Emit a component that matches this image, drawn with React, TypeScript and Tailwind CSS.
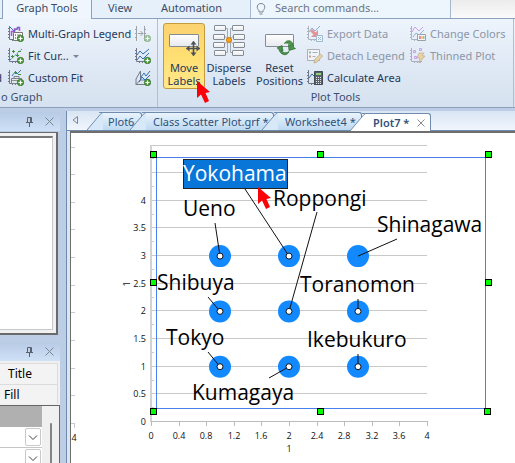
import type { ReactNode } from "react";

const UI = "font-['Noto_Sans','Open_Sans',sans-serif]";

/* ---------- small ribbon icons ---------- */

function Axes() {
  return (
    <g stroke="#6f7884" fill="none">
      <path d="M1.5 0v13.5H12" />
      <path d="M0 2.5h1M0 5.5h1M0 8.5h1M0 11.5h1M4.5 14v1M7.5 14v1M10.5 14v1" />
    </g>
  );
}

function Plus() {
  return (
    <g>
      <circle cx="12.5" cy="12.5" r="3.2" fill="#4f9a3d" stroke="#2f6f25" strokeWidth=".7" />
      <path d="M12.5 10.500v4M10.500 12.500h4" stroke="#fff" strokeWidth="1.2" />
    </g>
  );
}

function Icon({ children, faded = false }: { children: ReactNode; faded?: boolean }) {
  return (
    <svg viewBox="0 0 16 16" aria-hidden="true" className={`size-4 shrink-0 ${faded ? "opacity-50" : ""}`}>
      {children}
    </svg>
  );
}

const icons = {
  legend: (
    <Icon>
      <Axes />
      <path d="M3.500 10V5.500h3V3h3V1.500h2V5" fill="none" stroke="#b050d8" strokeWidth="1.500" />
      <path d="M2 1l4 4 5-4" fill="none" stroke="#3a78b8" />
      <path d="M5.500 6.500h9v8h-9z" fill="#fff" stroke="#777" />
      <path d="M7 9h1M7 12h1" stroke="#d05030" strokeWidth="1.500" />
      <path d="M9 9h4M9 12h2" stroke="#777" />
      <Plus />
    </Icon>
  ),
  fit: (
    <Icon>
      <Axes />
      <path d="M2 12L14 1" stroke="#3a78b8" strokeDasharray="2 1" />
      <path d="M4 3.500h3M5.500 2v3M8 7.500h3M9.500 6v3M3 8.500h3M4.500 7v3M10 3.500h3" stroke="#3f8f3a" />
      <Plus />
    </Icon>
  ),
  custom: (
    <Icon>
      <Axes />
      <path d="M4 6l3-4 2 2 4-4" fill="none" stroke="#3a78b8" />
      <path d="M6 2.500h3M7.500 1v3M10 4.500h3" stroke="#3f8f3a" />
      <path d="M3.500 8.500h10v5h-10zM6 8V6.500h5V8" fill="#e3e6ea" stroke="#7a828c" />
      <path d="M4 10.500h9" stroke="#8a9098" />
      <Plus />
    </Icon>
  ),
  addAxis: (
    <Icon faded>
      <path d="M1.500 0v15M9.500 0v15M0 3.500h1M0 7.500h1M0 11.500h1M10 3.500h1M10 7.500h1" stroke="#555" />
      <path d="M3 7.500h5M5.500 5L8 7.500 5.500 10" fill="none" stroke="#555" />
      <Plus />
    </Icon>
  ),
  addPlot: (
    <Icon>
      <Axes />
      <path d="M2 7l3-4 3 3 6-5" fill="none" stroke="#2f6fb5" />
      <path d="M2 12l3-4 3 3 6-6" fill="none" stroke="#2f6fb5" />
      <Plus />
    </Icon>
  ),
  addInset: (
    <Icon>
      <path d="M5.500 1v9H15M5.500 10L1 14.500h9M1 14.500V9l4.500-8" fill="none" stroke="#737b85" />
      <path d="M6 7l3-4 2 3 4-5M4 12l3-5 3 3 5-5" fill="none" stroke="#2f6fb5" />
      <Plus />
    </Icon>
  ),
  exportData: (
    <Icon faded>
      <Axes />
      <path d="M2 6l3-4 3 3 5-5" fill="none" stroke="#2f6fb5" />
      <path d="M4 4l5 5" stroke="#d93a32" strokeWidth="3" />
      <path d="M4 11h7V4z" fill="#d93a32" />
      <path d="M9.500 9.500h6v6h-6zM11 11l3 3M14 11l-3 3" fill="#fff" stroke="#5a83b0" />
    </Icon>
  ),
  detach: (
    <Icon faded>
      <path d="M.5 1.500h12v11H.5z" fill="#fff" stroke="#777" />
      <path d="M2 4.500h2" stroke="#3f8f3a" strokeWidth="2" />
      <path d="M2 8.500h2" stroke="#c05030" strokeWidth="2" />
      <path d="M5.500 4.500h5M5.500 8.500h3" stroke="#777" />
      <path d="M7 15l1-4 5.500-5 2 2-5.500 6z" fill="#f0bd54" stroke="#93702c" strokeWidth=".8" />
    </Icon>
  ),
  area: (
    <Icon>
      <Axes />
      <path d="M2 8l3-4 3 3" fill="none" stroke="#2f6fb5" />
      <path d="M7.500 1.500h8v13h-8z" fill="#59616a" stroke="#434a52" />
      <path d="M9 3h5v2H9z" fill="#8fd07c" />
      <path d="M9 7.500h5M9 9.500h5M9 11.500h5M9 13.500h5" stroke="#e8ebee" strokeDasharray="1 1" />
    </Icon>
  ),
  colors: (
    <Icon faded>
      <Axes />
      <path d="M2 6l3-5 4 4 4-4" fill="none" stroke="#b050d8" />
      <path d="M3 11l3-4 3 2 5-5" fill="none" stroke="#3a78b8" />
      <path d="M7.500 8.500h8v6h-8z" fill="#fff" stroke="#555" />
      <path d="M9 10h2v3H9z" fill="#d33" />
      <path d="M11 10h2v3h-2z" fill="#eb2" />
      <path d="M13 10h1.500v3H13z" fill="#29a" />
    </Icon>
  ),
  thinned: (
    <Icon faded>
      <Axes />
      <path d="M3.500 2.500h2v2h-2zM9.500.5h2v2h-2zM4.500 8.500h2v2h-2z" fill="none" stroke="#b050d8" />
      <path d="M9 5h5l-2 3h3l-6 7 1-5H7z" fill="#f3bd4c" stroke="#9b7633" strokeWidth=".7" />
    </Icon>
  ),
};

/* ---------- large ribbon icons ---------- */

function LabelBox({ x, y, w, h }: { x: number; y: number; w: number; h: number }) {
  return <rect x={x + 0.5} y={y + 0.5} width={w - 1} height={h - 1} rx=".5" fill="url(#labelFill)" stroke="#848b93" />;
}

function MoveIcon() {
  return (
    <svg viewBox="0 0 32 32" className="size-8 shrink-0" aria-hidden="true">
      <defs>
        <linearGradient id="labelFill" x2="0" y2="1">
          <stop offset="0" stopColor="#fff" />
          <stop offset="1" stopColor="#e6e9ee" />
        </linearGradient>
      </defs>
      <LabelBox x={1} y={10} w={30} h={13} />
      <path
        d="M25.500 17.500v14M18.500 24.500h14"
        stroke="#4b5158"
        strokeWidth="1.600"
      />
      <path d="M25.500 17l3 3.500h-6zM25.500 32l-3-3.500h6zM18 24.500l3.500-3v6zM32 24.500l-3.500-3v6z" fill="#4b5158" />
    </svg>
  );
}

function DisperseIcon() {
  return (
    <svg viewBox="0 0 32 32" className="size-8 shrink-0" aria-hidden="true">
      <path d="M12 4.500h2.500v24H12M20 4.500h-2.500v24H20M12 12.500l8 7M20 12.500l-8 7" fill="none" stroke="#a2a8b0" />
      {[1, 10, 18, 26].map((y, i) => (
        <g key={y}>
          <LabelBox x={i % 3 === 0 ? 1 : 0} y={y} w={12} h={6} />
          <LabelBox x={i % 3 === 0 ? 19 : 20} y={y} w={12} h={6} />
        </g>
      ))}
      <circle cx="16" cy="16" r="2.500" fill="#ffa51e" stroke="#d07a00" />
    </svg>
  );
}

function ResetIcon() {
  return (
    <svg viewBox="0 0 32 32" className="size-8 shrink-0" aria-hidden="true">
      <LabelBox x={1} y={10} w={29} h={13} />
      <path d="M13 24l5-2.500 1 5.500-1.700-1c1 3 5 3.500 7.700 1.500-1 4-8 5.500-10.500-3z" fill="#4c944c" stroke="#28682c" strokeWidth=".7" />
      <path d="M31.500 24.500l-6.500 2-.5-6 2 1.500c0-2.500-3-3.500-6-2.500 2-4.500 9-4 9 4z" fill="#4c944c" stroke="#28682c" strokeWidth=".7" />
    </svg>
  );
}

/* ---------- ribbon controls ---------- */

function SmallButton({ icon, label, disabled = false, menu = false }: { icon: ReactNode; label?: string; disabled?: boolean; menu?: boolean }) {
  return (
    <button
      type="button"
      disabled={disabled}
      aria-label={label ?? "Add"}
      className={`flex h-[22px] items-center gap-1 whitespace-nowrap ${disabled ? "text-[#8c97a8]" : "text-[#1e395b]"}`}
    >
      {icon}
      {label}
      {menu && <span className="border-x-3 border-t-3 border-x-transparent border-t-[#7b8798]" />}
    </button>
  );
}

function LargeButton({ icon, label, width, active = false }: { icon: ReactNode; label: string; width: string; active?: boolean }) {
  return (
    <button
      type="button"
      aria-pressed={active}
      className={`flex h-[66px] shrink-0 flex-col items-center rounded-[3px] border text-center leading-[13px] text-[#1e395b] ${width} ${
        active ? "border-[#c29b3e] bg-linear-to-b from-[#fbd271] via-[#ffdf72] to-[#ffe98a]" : "border-transparent"
      }`}
    >
      {icon}
      <span className="pt-[5px]">{label}</span>
    </button>
  );
}

function RibbonTabs() {
  return (
    <nav className="flex h-[19px] border-b border-[#8ba0bc] bg-linear-to-b from-[#ececec] to-[#fafafa] leading-4 text-[#3b4c66]">
      <div className="flex w-[250px] shrink-0 bg-[#e6f0fa]">
        <span className="w-[3px] border-r border-[#8ba0bc]" />
        <button type="button" className="-mb-px h-[19px] w-[89px] border-r border-[#8ba0bc] bg-[#f0f6fd] pb-1">Graph Tools</button>
        <button type="button" className="w-[56px] pb-1">View</button>
        <button type="button" className="w-[87px] pb-1">Automation</button>
      </div>
      <label className="flex w-[201px] shrink-0 items-center border-x border-[#a6b7ce] bg-[#edf5fd]">
        <svg viewBox="0 0 12 14" className="ml-1 h-[14px] w-3 shrink-0" aria-hidden="true">
          <path d="M4 10V8.500C1 6 2 1.500 6 1.500S11 6 8 8.500V10zM4.500 12h3" fill="none" stroke="#7a8390" />
        </svg>
        <input
          aria-label="Search commands"
          placeholder="Search commands..."
          className="ml-2 h-4 w-full bg-transparent pb-0.5 outline-none placeholder:text-[#6c7683]"
        />
      </label>
    </nav>
  );
}

function Ribbon() {
  return (
    <div className="flex h-[89px] border-b border-[#8ba0bc] bg-linear-to-b from-[#edf4fc] via-[#e0e9f5] to-[#d6e2f0]">
      <section className="flex w-[158px] shrink-0 flex-col border-r border-[#b0bfd3] pt-1">
        <div className="flex">
          <div className="flex w-2 shrink-0 flex-col justify-end">
            <span className="flex h-[22px] w-0.5 items-center justify-end text-[#1e395b]">d</span>
          </div>
          <div className="flex w-[127px] flex-col items-start">
            <SmallButton icon={icons.legend} label="Multi-Graph Legend" />
            <SmallButton icon={icons.fit} label="Fit Cur..." menu />
            <SmallButton icon={icons.custom} label="Custom Fit" />
          </div>
          <div className="flex flex-col">
            <SmallButton icon={icons.addAxis} disabled />
            <SmallButton icon={icons.addPlot} />
            <SmallButton icon={icons.addInset} />
          </div>
        </div>
        <h2 className="pl-px leading-4 text-[#3d4f70]">o Graph</h2>
      </section>
      <section className="flex w-[356px] shrink-0 flex-col border-r border-[#b0bfd3] pt-1">
        <div className="flex h-[66px] pl-[5px]">
          <LargeButton icon={<MoveIcon />} label="Move Labels" width="w-[42px]" active />
          <LargeButton icon={<DisperseIcon />} label="Disperse Labels" width="w-[48px]" />
          <LargeButton icon={<ResetIcon />} label="Reset Positions" width="w-[53px]" />
          <div className="flex w-[104px] shrink-0 flex-col items-start pl-px">
            <SmallButton icon={icons.exportData} label="Export Data" disabled />
            <SmallButton icon={icons.detach} label="Detach Legend" disabled />
            <SmallButton icon={icons.area} label="Calculate Area" />
          </div>
          <div className="flex flex-col items-start">
            <SmallButton icon={icons.colors} label="Change Colors" disabled />
            <SmallButton icon={icons.thinned} label="Thinned Plot" disabled />
          </div>
        </div>
        <h2 className="text-center leading-4 text-[#3d4f70]">Plot Tools</h2>
      </section>
    </div>
  );
}

/* ---------- side panels ---------- */

function PanelHeader() {
  return (
    <header className="flex h-[19px] shrink-0 items-center justify-end gap-[11px] bg-linear-to-b from-[#b8cbe5] to-[#cfe1f7] pr-[6px]">
      <button type="button" aria-label="Pin">
        <svg viewBox="0 0 9 10" className="h-[10px] w-[9px]" fill="none" stroke="#59616e">
          <path d="M2.500 5.500v-5h4v5M5.500 1v4M1 5.500h7M4.500 6v4" />
        </svg>
      </button>
      <button type="button" aria-label="Close">
        <svg viewBox="0 0 9 9" className="size-[9px]" fill="none" stroke="#7c8592">
          <path d="M.5.5l8 8M8.500.5l-8 8" />
        </svg>
      </button>
    </header>
  );
}

function ValueSelect({ label }: { label: string }) {
  return (
    <div className="flex h-[21px] justify-end border-b border-[#c6c6c6] bg-white pt-px pr-px">
      <span className="relative h-[18px] w-4 rounded-xs border border-[#c9c9c9]">
        <select aria-label={label} className="absolute inset-0 w-full appearance-none opacity-0">
          <option></option>
        </select>
        <svg viewBox="0 0 14 16" className="h-4 w-3.5" fill="none" stroke="#444" aria-hidden="true">
          <path d="M3 6.500l4 4 4-4" />
        </svg>
      </span>
    </div>
  );
}

function SidePanels() {
  return (
    <aside className="flex w-[60px] shrink-0 flex-col pt-px">
      <PanelHeader />
      <div className="mt-px mr-0.5 h-[203px] border-t border-r-2 border-b-2 border-[#6a6a6a] bg-[#f0f0f0] pt-[3px] pr-[3px] pb-[3px]">
        <div className="h-full border-t-2 border-r border-b border-[#777] border-r-[#c9c9c9] border-b-[#c9c9c9] bg-white" />
      </div>
      <div className="h-[7px]" />
      <PanelHeader />
      <div className="flex grow flex-col bg-[#f0f0f0] text-[12px] leading-[20px] text-black">
        <button type="button" className="mt-0.5 mr-0.5 h-[21px] border-t border-r border-[#dcdcdc] bg-[#f3f3f3] pl-2 text-left">Title</button>
        <button type="button" className="mr-0.5 h-[20px] border-t border-r border-[#dcdcdc] bg-[#f3f3f3] pl-1 text-left">Fill</button>
        <div className="mt-px flex h-[60px] overflow-hidden border-t border-r border-[#666]">
          <div className="w-[42px]">
            <div className="h-[21px] bg-[#b0b0b0]" />
            <ValueSelect label="First property" />
            <ValueSelect label="Second property" />
          </div>
          <div className="ml-2 mt-[17px] w-0.5 rounded-t-full bg-[#858585]" />
        </div>
      </div>
    </aside>
  );
}

/* ---------- document tabs ---------- */

function DocTab({ label, width, text, active = false }: { label: string; width: string; text: string; active?: boolean }) {
  return (
    <button
      type="button"
      className={`flex h-[18px] shrink-0 items-center rounded-tr-[3px] border-t border-r border-[#6f8cae] leading-4 text-[#30507c] ${width} ${
        active ? "-mb-px bg-white font-semibold" : "bg-linear-to-b from-[#e9f4fd] to-[#bdd9f1]"
      }`}
    >
      <svg viewBox="0 0 16 18" className="-mt-px -ml-3 h-[18px] w-4 shrink-0" aria-hidden="true">
        <path d="M0 18L14 1.500Q15 .5 16 .5V18z" fill={active ? "#fff" : "#d7e9f8"} />
        <path d="M0 18L14 1.500Q15 .5 16 .5" fill="none" stroke="#6f8cae" />
      </svg>
      <span className={`whitespace-nowrap ${text}`}>{label}</span>
      {active && (
        <svg viewBox="0 0 8 8" className="ml-2 size-2 shrink-0" fill="none" stroke="#858b94" aria-label="Close">
          <path d="M.5.5l7 7M7.500.5l-7 7" />
        </svg>
      )}
    </button>
  );
}

function DocTabs() {
  return (
    <nav className="flex h-[20px] items-end border-b border-[#6f8cae] bg-linear-to-b from-[#d9e5f4] to-[#f0f6fd]">
      <svg viewBox="0 0 6 8" className="mb-[6px] ml-[5px] h-2 w-1.5 shrink-0" fill="none" stroke="#7b8797" aria-hidden="true">
        <path d="M5.500.5v7L1 4z" />
      </svg>
      <span className="w-[21px] shrink-0" />
      <DocTab label="Plot6" width="w-[43px]" text="pl-[5px]" />
      <DocTab label="Class Scatter Plot.grf *" width="w-[132px]" text="pl-[7px]" />
      <DocTab label="Worksheet4 *" width="w-[88px]" text="pl-[7px]" />
      <DocTab label="Plot7 *" width="w-[69px]" text="pl-[7px]" active />
    </nav>
  );
}

/* ---------- plot ---------- */

const X0 = 151;
const Y0 = 422;
const UNIT_X = 69;
const UNIT_Y = 55.3;

const stations = [
  { name: "Ueno", at: [1, 3], text: [183, 216], from: [215, 223] },
  { name: "Roppongi", at: [2, 2], text: [273, 206], from: [317, 212] },
  { name: "Shinagawa", at: [3, 3], text: [377, 232], from: [397, 239], hidden: true },
  { name: "Shibuya", at: [1, 2], text: [157, 290], from: [208, 297] },
  { name: "Toranomon", at: [3, 2], text: [300, 292], from: [358, 299] },
  { name: "Tokyo", at: [1, 1], text: [166, 345], from: [208, 352] },
  { name: "Ikebukuro", at: [3, 1], text: [307, 347], from: [358, 354] },
  { name: "Kumagaya", at: [2, 1], text: [192, 400], from: [269, 378] },
  { name: "Yokohama", at: [2, 3], text: [183, 181], from: [245, 189] },
];

const handles = [
  [153, 154], [320, 154], [488, 154],
  [153, 282], [488, 282],
  [153, 411], [320, 411], [487, 411],
];

function Pointer({ x, y }: { x: number; y: number }) {
  return <path d="M0 0v17l4-3.500 4 8.500 4-2-3.500-8 4.500-1z" transform={`translate(${x} ${y})`} fill="#fb0207" />;
}

function Plot() {
  const rows = Array.from({ length: 11 }, (_, i) => i / 2);
  const cols = Array.from({ length: 11 }, (_, i) => i);
  return (
    <svg viewBox="71 133 444 331" className="h-[331px] w-[444px] shrink-0 overflow-visible font-['Open_Sans','Noto_Sans',sans-serif]" role="img" aria-label="Scatter plot of stations">
      <g stroke="#c9c9c9">
        {rows.map((v) => (
          <path key={v} d={`M151 ${Math.round(Y0 - v * UNIT_Y) - 0.5}H427`} />
        ))}
        {rows.map((v) => (
          <path key={v} d={`M71 ${Math.round(Y0 - v * UNIT_Y) + 1.5}h4`} />
        ))}
        {rows.slice(0, 10).map((v) => (
          <path key={v} d={`M151 ${Math.round(Y0 - (v + 0.25) * UNIT_Y) - 0.5}h3`} />
        ))}
        <path d="M74.500 423v5" />
      </g>
      <path d="M151 145v277" stroke="#d2d2d2" strokeWidth="2" />
      <path d="M151 421.500H427" stroke="#bbb" />
      {cols.map((c) => (
        <path key={c} d={`M${Math.round(X0 + c * 27.6) + 0.5} 421v5`} stroke="#bbb" />
      ))}
      <g fontSize="9" fill="#111">
        <g textAnchor="end">
          {rows.slice(0, 9).map((v) => (
            <text key={v} x="146" y={Math.round(Y0 - v * UNIT_Y) + 3}>{v}</text>
          ))}
        </g>
        <g textAnchor="middle">
          {cols.map((c) => (
            <text key={c} x={Math.round(X0 + c * 27.6)} y="439">{Number((c * 0.4).toFixed(1))}</text>
          ))}
          <text x="289" y="452">1</text>
          <text x="74" y="441">4</text>
          <text transform="translate(130 284) rotate(-90)">1</text>
        </g>
      </g>
      <rect x="156.500" y="157.500" width="329" height="251" fill="none" stroke="#4a80ee" />
      {stations.map(({ name, at }) => (
        <circle key={name} cx={X0 + at[0] * UNIT_X} cy={Y0 - at[1] * UNIT_Y} r="11" fill="#1389ff" />
      ))}
      <rect x="183.500" y="159.500" width="104" height="29" fill="#0876d8" stroke="#222" />
      {stations.map(({ name, at, text, from, hidden }) => {
        const x = X0 + at[0] * UNIT_X;
        const y = Y0 - at[1] * UNIT_Y;
        return (
          <g key={name}>
            <path d={`M${from[0]} ${from[1]}L${x} ${y}`} stroke="#111" />
            {!hidden && <circle cx={x} cy={y} r="3" fill="#fff" stroke="#111" />}
            <text x={text[0]} y={text[1]} fontSize="21" fill={name === "Yokohama" ? "#fff" : "#000"}>{name}</text>
          </g>
        );
      })}
      {handles.map(([x, y]) => (
        <rect key={`${x}-${y}`} x={x - 2.5} y={y - 2.5} width="6" height="6" fill="#0f0" stroke="#000" />
      ))}
      <Pointer x={258} y={187} />
    </svg>
  );
}

export default function App() {
  return (
    <div className={`relative min-h-screen overflow-hidden bg-[#bccde5] text-[11px] ${UI}`}>
      <RibbonTabs />
      <Ribbon />
      <main className="flex pt-[3px]">
        <SidePanels />
        <div className="ml-1.5 min-w-0 flex-1 overflow-hidden border-l border-[#6f8cae] bg-[#d9e5f4]">
          <DocTabs />
          <div className="ml-[3px] overflow-hidden border-t-2 border-l border-[#6e6e6e] bg-white">
            <Plot />
          </div>
        </div>
      </main>
      <svg viewBox="0 0 13 23" className="pointer-events-none absolute top-[81px] left-[197px] h-[23px] w-[13px]" aria-hidden="true">
        <Pointer x={0} y={0} />
      </svg>
    </div>
  );
}
